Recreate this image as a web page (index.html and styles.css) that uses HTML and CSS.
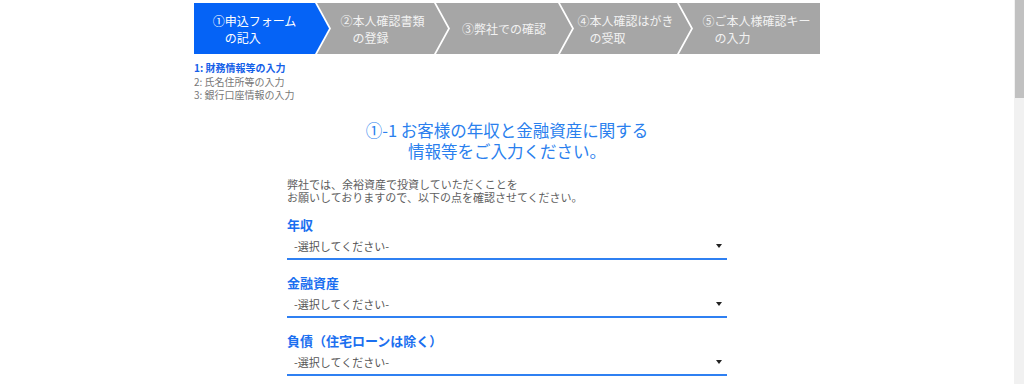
FILE: index.html
```html
<!DOCTYPE html>
<html lang="ja">
<head>
<meta charset="utf-8">
<title>お客様情報の入力</title>
<link rel="stylesheet" href="styles.css">
</head>
<body>
<div class="page">
  <div class="container">
    <div class="steps">
      <div class="step step-first step-active"><span class="step-text">①申込フォーム<br>の記入</span></div>
      <div class="step step-mid step-w2"><span class="step-text">②本人確認書類<br>の登録</span></div>
      <div class="step step-mid step-w3"><span class="step-text">③弊社での確認</span></div>
      <div class="step step-mid step-w4"><span class="step-text">④本人確認はがき<br>の受取</span></div>
      <div class="step step-last"><span class="step-text">⑤ご本人様確認キー<br>の入力</span></div>
    </div>
    <div class="substeps">
      <div class="substep substep-current">1: 財務情報等の入力</div>
      <div class="substep">2: 氏名住所等の入力</div>
      <div class="substep">3: 銀行口座情報の入力</div>
    </div>
    <h1 class="title">①-1 お客様の年収と金融資産に関する<br>情報等をご入力ください。</h1>
    <div class="form">
      <p class="lead">弊社では、余裕資産で投資していただくことを<br>お願いしておりますので、以下の点を確認させてください。</p>
      <div class="field">
        <div class="field-label">年収</div>
        <div class="select"><span class="select-text">-選択してください-</span><span class="select-arrow"></span></div>
      </div>
      <div class="field">
        <div class="field-label">金融資産</div>
        <div class="select"><span class="select-text">-選択してください-</span><span class="select-arrow"></span></div>
      </div>
      <div class="field">
        <div class="field-label">負債（住宅ローンは除く）</div>
        <div class="select"><span class="select-text">-選択してください-</span><span class="select-arrow"></span></div>
      </div>
    </div>
  </div>
</div>
<div class="scrollbar"><div class="scrollbar-thumb"></div></div>
</body>
</html>
```

FILE: styles.css
```css
html, body {
  margin: 0;
  padding: 0;
  background: #ffffff;
}

body {
  font-family: "Noto Sans CJK JP", "Noto Sans", "Liberation Sans", sans-serif;
  color: #555555;
  overflow: hidden;
}

.page {
  margin-right: 10px;
  padding-top: 3px;
}

.container {
  width: 626px;
  margin: 0 auto;
}

/* progress steps */
.steps {
  display: flex;
  height: 51px;
}

.step {
  display: flex;
  align-items: center;
  justify-content: center;
  height: 51px;
  background: #a6a6a6;
  color: #f2f2f2;
  font-size: 12px;
  line-height: 17px;
  box-sizing: border-box;
  flex: none;
}

.step-active {
  background: #0563f6;
  color: #ffffff;
}

.step-first {
  width: 135px;
  padding-right: 14px;
  clip-path: polygon(0 0, calc(100% - 14px) 0, 100% 50%, calc(100% - 14px) 100%, 0 100%);
}

.step-mid {
  margin-left: -12px;
  padding: 0 14px;
  clip-path: polygon(0 0, calc(100% - 14px) 0, 100% 50%, calc(100% - 14px) 100%, 0 100%, 14px 50%);
}

.step-w2 { width: 131px; }
.step-w3 { width: 136px; }
.step-w4 { width: 131px; }

.step-last {
  width: 141px;
  margin-left: -12px;
  padding-left: 14px;
  clip-path: polygon(0 0, 100% 0, 100% 100%, 0 100%, 14px 50%);
}

.step-text {
  display: inline-block;
  padding-left: 1em;
  text-indent: -1em;
  white-space: nowrap;
}

/* sub steps */
.substeps {
  margin-top: 7px;
  font-size: 10px;
  line-height: 13.5px;
  color: #777777;
}

.substep-current {
  color: #1460e8;
  font-weight: bold;
}

/* title */
.title {
  margin: 18px 0 0;
  text-align: center;
  font-size: 16.5px;
  line-height: 21px;
  font-weight: normal;
  color: #2a7fee;
}

/* form */
.form {
  width: 440px;
  margin: 0 auto;
}

.lead {
  margin: 16px 0 0;
  font-size: 11px;
  line-height: 13px;
  color: #606060;
}

.field {
  margin-top: 12.5px;
}

.field + .field {
  margin-top: 14px;
}

.field-label {
  font-size: 13px;
  line-height: 18px;
  font-weight: bold;
  color: #1b6ff0;
}

.select {
  display: flex;
  align-items: center;
  justify-content: space-between;
  height: 24px;
  padding: 0 5px 0 7px;
  border-bottom: 2px solid #2f80f2;
}

.select-text {
  font-size: 11px;
  color: #555555;
}

.select-arrow {
  width: 0;
  height: 0;
  border-left: 3px solid transparent;
  border-right: 3px solid transparent;
  border-top: 4px solid #222222;
}

/* fake scrollbar */
.scrollbar {
  position: fixed;
  top: 0;
  right: 0;
  width: 10px;
  height: 100%;
  background: #f1f1f1;
}

.scrollbar-thumb {
  margin-left: 1px;
  width: 9px;
  height: 98px;
  background: #c1c1c1;
}
```
